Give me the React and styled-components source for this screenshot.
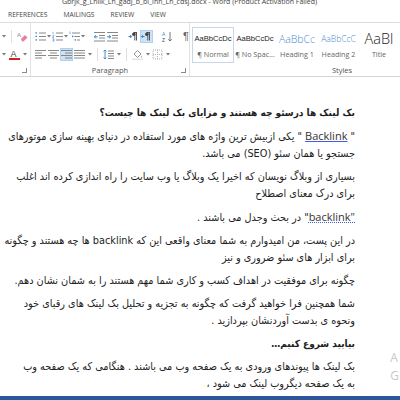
import styled, { createGlobalStyle } from "styled-components";

const Global = createGlobalStyle`
  html, body {
    margin: 0;
    padding: 0;
    width: 400px;
    height: 400px;
    overflow: hidden;
    background: #fff;
  }
`;

const Window = styled.div`
  width: 400px;
  height: 400px;
  display: flex;
  flex-direction: column;
  font-family: "Liberation Sans", "DejaVu Sans", sans-serif;
  overflow: hidden;
`;

const TitleBar = styled.div`
  height: 6px;
  overflow: hidden;
  display: flex;
  align-items: flex-end;
  padding-left: 62px;
  font-family: "Open Sans", "Liberation Sans", sans-serif;
  font-size: 7px;
  line-height: 8px;
  color: #444;
  white-space: nowrap;
`;

const Tabs = styled.div`
  height: 16px;
  display: flex;
  align-items: center;
  gap: 16px;
  padding-left: 8px;
  font-family: "Open Sans", "Liberation Sans", sans-serif;
  font-size: 6.7px;
  color: #444;
`;

const Ribbon = styled.div`
  height: 53px;
  display: flex;
  border-top: 1px solid #dcdcdc;
  border-bottom: 1px solid #d4d4d4;
  box-shadow: 0 1px 2px rgba(0, 0, 0, 0.06);
  background: #fff;
`;

const Group = styled.div`
  width: ${(p) => p.$w}px;
  flex-shrink: 0;
  display: flex;
  flex-direction: column;
  border-right: 1px solid #e2e2e2;
  position: relative;
`;

const Row = styled.div`
  height: 19px;
  display: flex;
  align-items: center;
  padding-left: ${(p) => p.$pad || 0}px;
  margin-top: ${(p) => p.$top || 0}px;
`;

const GroupLabel = styled.div`
  margin-top: auto;
  height: 13px;
  display: flex;
  align-items: center;
  justify-content: center;
  padding-left: ${(p) => p.$shift || 0}px;
  font-family: "Open Sans", "Liberation Sans", sans-serif;
  font-size: 7.5px;
  color: #555;
`;

const Launcher = styled.span`
  position: absolute;
  right: 3px;
  bottom: 3px;
  width: 4px;
  height: 4px;
  border-right: 1px solid #8a8a8a;
  border-bottom: 1px solid #8a8a8a;
`;

const Btn = styled.span`
  display: inline-flex;
  align-items: center;
  justify-content: center;
  width: ${(p) => p.$w || 13}px;
  height: 13px;
  box-sizing: border-box;
  background: ${(p) => (p.$active ? "#cde1f7" : "transparent")};
  border: 1px solid ${(p) => (p.$active ? "#b3cfee" : "transparent")};
`;

const CaretBox = styled.span`
  display: inline-flex;
  align-items: center;
  justify-content: center;
  width: 7px;
  height: 13px;
`;

const Sep = styled.span`
  width: 1px;
  height: 13px;
  background: #e0e0e0;
  margin: 0 4px;
`;

const Caret = () => (
  <CaretBox>
    <svg width="4" height="3" viewBox="0 0 4 3">
      <path d="M0 0h4L2 2.5z" fill="#777" />
    </svg>
  </CaretBox>
);

const G = "#7a7a7a";
const B = "#3a82cc";

const Icon = ({ children }) => (
  <svg width="11" height="11" viewBox="0 0 11 11">
    {children}
  </svg>
);

const Bullets = () => (
  <Icon>
    <rect x="0.5" y="1.2" width="1.4" height="1.4" fill={B} />
    <rect x="0.5" y="4.7" width="1.4" height="1.4" fill={B} />
    <rect x="0.5" y="8.2" width="1.4" height="1.4" fill={B} />
    <path d="M4 2h7M4 5.5h7M4 9h7" stroke={G} strokeWidth="0.9" />
  </Icon>
);

const Numbering = () => (
  <Icon>
    <path d="M1 0.8v2.4M0.5 4.6h1.4l-1.4 2h1.4M0.5 7.8h1.4v2.4H0.5M0.6 9h1.2" stroke={B} strokeWidth="0.6" fill="none" />
    <path d="M4 2h7M4 5.5h7M4 9h7" stroke={G} strokeWidth="0.9" />
  </Icon>
);

const Multilevel = () => (
  <Icon>
    <path d="M1 0.5v2.5" stroke={B} strokeWidth="0.6" />
    <rect x="3" y="4.7" width="1.4" height="1.4" fill={B} />
    <rect x="5.5" y="8.2" width="1.4" height="1.4" fill={B} />
    <path d="M3 2h8M5.5 5.5h5.5M8 9h3" stroke={G} strokeWidth="0.9" />
  </Icon>
);

const Indent = ({ dir }) => (
  <Icon>
    <path d="M0 1.5h11M5 4.5h6M5 7h6M0 10h11" stroke={G} strokeWidth="0.9" />
    {dir === "in" ? (
      <path d="M0 5.8h3.5M2 4.2l1.7 1.6L2 7.4" stroke={B} strokeWidth="1" fill="none" />
    ) : (
      <path d="M3.7 5.8H0.3M1.9 4.2L0.3 5.8l1.6 1.6" stroke={B} strokeWidth="1" fill="none" />
    )}
  </Icon>
);

const Direction = ({ rtl }) => (
  <Icon>
    <path d="M5.5 1.5h3.5M6.8 1.5v8M8.5 1.5v8" stroke="#444" strokeWidth="0.9" />
    <circle cx="5.8" cy="3.3" r="1.7" fill="#444" />
    {rtl ? (
      <path d="M3.5 5.5H0.5M1.8 4L0.4 5.5 1.8 7" stroke={B} strokeWidth="1" fill="none" />
    ) : (
      <path d="M0.5 5.5h3M2.2 4l1.4 1.5L2.2 7" stroke={B} strokeWidth="1" fill="none" />
    )}
  </Icon>
);

const Sort = () => (
  <Icon>
    <text x="0" y="4.6" fontSize="4.8" fill={B} fontFamily="Liberation Sans">A</text>
    <text x="0" y="10.6" fontSize="4.8" fill="#444" fontFamily="Liberation Sans">Z</text>
    <path d="M8 1v9M6.3 8.2L8 10l1.7-1.8" stroke="#666" strokeWidth="0.9" fill="none" />
  </Icon>
);

const Pilcrow = styled.span`
  font-family: "Liberation Sans", sans-serif;
  font-size: 11px;
  line-height: 11px;
  color: #666;
`;

const Align = ({ mode }) => {
  const rows = [1.5, 4, 6.5, 9];
  const widths = [11, 7, 11, 7];
  return (
    <Icon>
      {rows.map((y, i) => {
        const w = mode === "justify" ? 11 : widths[i];
        let x = 0;
        if (mode === "center") x = (11 - w) / 2;
        if (mode === "right") x = 11 - w;
        return <path key={i} d={`M${x} ${y}h${w}`} stroke={G} strokeWidth="0.9" />;
      })}
    </Icon>
  );
};

const LineSpacing = () => (
  <Icon>
    <path d="M2 1v9M0.5 2.5L2 1l1.5 1.5M0.5 8.5L2 10l1.5-1.5" stroke={B} strokeWidth="0.9" fill="none" />
    <path d="M5 2h6M5 4.5h6M5 7h6M5 9.5h6" stroke={G} strokeWidth="0.9" />
  </Icon>
);

const Shading = () => (
  <Icon>
    <path d="M2 5l3.5-3.5L9 5 5.5 8.5z" fill="#fff" stroke="#888" strokeWidth="0.9" />
    <path d="M9.3 6.5c0.6 1 0.8 1.6 0.2 2-0.6 0.3-1-0.6-0.2-2z" fill="#999" />
    <path d="M0 10.2h11" stroke="#e2e2e2" strokeWidth="1.4" />
  </Icon>
);

const Borders = () => (
  <Icon>
    <rect x="1" y="1" width="9" height="9" fill="none" stroke="#aaa" strokeWidth="0.9" strokeDasharray="1 1" />
    <path d="M5.5 1v9M1 5.5h9" stroke="#aaa" strokeWidth="0.9" strokeDasharray="1 1" />
  </Icon>
);

const Eraser = () => (
  <Icon>
    <text x="0" y="6" fontSize="6" fill="#888" fontFamily="Liberation Sans">A</text>
    <path d="M4 8l4-4 2.5 2.5-4 4H5z" fill="#e57fa8" />
  </Icon>
);

const FontColor = () => (
  <Icon>
    <text x="1.5" y="8" fontSize="9" fill="#444" fontFamily="Liberation Sans">A</text>
    <rect x="0" y="9" width="11" height="2" fill="#d01f24" />
  </Icon>
);

const Gallery = styled.div`
  display: flex;
  margin: 4px 0 0 2px;
  height: 36px;
`;

const StyleCard = styled.div`
  width: ${(p) => p.$w}px;
  flex-shrink: 0;
  box-sizing: border-box;
  display: flex;
  flex-direction: column;
  align-items: center;
  justify-content: space-between;
  padding: 2px 0 3px;
  border: 1px solid ${(p) => (p.$selected ? "#c7d6ea" : "transparent")};
  overflow: hidden;
  white-space: nowrap;
`;

const Preview = styled.div`
  height: 18px;
  display: flex;
  align-items: center;
  line-height: 1;
  font-family: ${(p) => (p.$light ? '"Open Sans", "Liberation Sans", sans-serif' : '"Liberation Sans", sans-serif')};
  font-size: ${(p) => p.$size}px;
  font-weight: ${(p) => (p.$light ? 300 : 400)};
  color: ${(p) => p.$color || "#222"};
`;

const StyleName = styled.div`
  font-family: "Open Sans", "Liberation Sans", sans-serif;
  font-size: 7.2px;
  line-height: 9px;
  color: #666;
`;

const DocArea = styled.div`
  flex: 1;
  position: relative;
  background: #fff;
  overflow: hidden;
  padding-top: 27px;
`;

const Page = styled.div`
  width: 355px;
  display: flex;
  flex-direction: column;
  align-items: flex-end;
`;

const Para = styled.div.attrs({ dir: "rtl" })`
  direction: rtl;
  display: flex;
  flex-direction: column;
  align-items: flex-start;
  margin-bottom: 6px;
  font-family: "DejaVu Sans Condensed", "DejaVu Sans", sans-serif;
  font-size: ${(p) => (p.$bold ? 10 : 10.8)}px;
  line-height: 17px;
  color: #1e1e1e;
  font-weight: ${(p) => (p.$bold ? 700 : 400)};
`;

const Line = styled.div`
  white-space: nowrap;
`;

const Latin = styled.span`
  font-family: "Open Sans", "Liberation Sans", sans-serif;
  font-size: 11px;
  color: #333;
  text-decoration: underline;
  text-decoration-style: ${(p) => (p.$dotted ? "dotted" : "solid")};
  text-decoration-color: #3c5ee8;
`;

const Watermark = styled.div`
  position: absolute;
  right: 1px;
  top: 272px;
  display: flex;
  flex-direction: column;
  font-family: "Open Sans", "Liberation Sans", sans-serif;
  font-size: 12px;
  line-height: 18px;
  color: #c8c8c8;
`;

const StatusBar = styled.div`
  height: 4px;
  background: #2b579a;
`;

export default function App() {
  return (
    <Window>
      <Global />
      <TitleBar>Gbrjk_g_Lhllk_Lh_gadj_b_bi_lhh_Lh_cdsj.docx - Word (Product Activation Failed)</TitleBar>
      <Tabs>
        <span>REFERENCES</span>
        <span>MAILINGS</span>
        <span>REVIEW</span>
        <span>VIEW</span>
      </Tabs>
      <Ribbon>
        <Group $w={30}>
          <Row $top={4}>
            <Caret />
            <Sep />
            <Btn><Eraser /></Btn>
          </Row>
          <Row>
            <Caret />
            <Btn $w={14}><FontColor /></Btn>
            <Caret />
          </Row>
          <GroupLabel />
          <Launcher />
        </Group>
        <Group $w={158}>
          <Row $top={4} $pad={3}>
            <Btn><Bullets /></Btn>
            <Caret />
            <Btn><Numbering /></Btn>
            <Caret />
            <Btn><Multilevel /></Btn>
            <Caret />
            <Sep />
            <Btn $w={14}><Indent dir="out" /></Btn>
            <Btn $w={14}><Indent dir="in" /></Btn>
            <Sep />
            <Btn><Direction /></Btn>
            <Btn $active><Direction rtl /></Btn>
            <Sep />
            <Btn $w={14}><Sort /></Btn>
            <Sep />
            <Btn><Pilcrow>¶</Pilcrow></Btn>
          </Row>
          <Row $pad={3}>
            <Btn><Align mode="left" /></Btn>
            <Btn><Align mode="center" /></Btn>
            <Btn $active><Align mode="right" /></Btn>
            <Btn><Align mode="justify" /></Btn>
            <Caret />
            <Sep />
            <Btn><LineSpacing /></Btn>
            <Caret />
            <Sep />
            <Btn><Shading /></Btn>
            <Caret />
            <Btn><Borders /></Btn>
            <Caret />
          </Row>
          <GroupLabel>Paragraph</GroupLabel>
          <Launcher />
        </Group>
        <Group $w={212}>
          <Gallery>
            <StyleCard $w={42} $selected>
              <Preview $size={7.6}>AaBbCcDc</Preview>
              <StyleName>¶ Normal</StyleName>
            </StyleCard>
            <StyleCard $w={42}>
              <Preview $size={7.6}>AaBbCcDc</Preview>
              <StyleName>¶ No Spac...</StyleName>
            </StyleCard>
            <StyleCard $w={42}>
              <Preview $size={10.5} $color="#4a8ad0" $light>AaBbCc</Preview>
              <StyleName>Heading 1</StyleName>
            </StyleCard>
            <StyleCard $w={41}>
              <Preview $size={8.5} $color="#4a8ad0" $light>AaBbCcC</Preview>
              <StyleName>Heading 2</StyleName>
            </StyleCard>
            <StyleCard $w={40}>
              <Preview $size={14.5} $light>AaBl</Preview>
              <StyleName>Title</StyleName>
            </StyleCard>
          </Gallery>
          <GroupLabel $shift={92}>Styles</GroupLabel>
        </Group>
      </Ribbon>
      <DocArea>
        <Page>
          <Para $bold>
            <Line>بک لینک ها درسئو چه هستند و مزایای بک لینک ها چیست؟</Line>
          </Para>
          <Para>
            <Line>" <Latin>Backlink</Latin> " یکی ازبیش ترین  واژه های مورد استفاده در دنیای  بهینه سازی موتورهای</Line>
            <Line>جستجو یا همان سئو (SEO) می باشد.</Line>
          </Para>
          <Para>
            <Line>بسیاری از وبلاگ نویسان که اخیرا یک وبلاگ یا وب سایت را راه اندازی کرده اند اغلب</Line>
            <Line>برای درک معنای اصطلاح</Line>
          </Para>
          <Para>
            <Line><Latin $dotted>"backlink</Latin>" در بحث وجدل می باشند .</Line>
          </Para>
          <Para>
            <Line>در این پست، من امیدوارم به شما معنای واقعی این که backlink ها  چه هستند و چگونه</Line>
            <Line>برای ابزار  های سئو ضروری و نیز</Line>
          </Para>
          <Para>
            <Line>چگونه برای موفقیت در اهداف کسب و کاری شما مهم هستند را به شمان نشان دهم.</Line>
          </Para>
          <Para>
            <Line> شما همچنین فرا خواهید گرفت که چگونه به تجزیه و تحلیل بک لینک های رقبای خود</Line>
            <Line>ونحوه ی بدست آوردنشان  بپردازید .</Line>
          </Para>
          <Para $bold>
            <Line>بیایید شروع کنیم…</Line>
          </Para>
          <Para>
            <Line>بک لینک ها پیوندهای ورودی به یک صفحه وب می باشند . هنگامی که یک صفحه وب</Line>
            <Line>به یک صفحه دیگروب لینک می شود ،</Line>
          </Para>
        </Page>
        <Watermark>
          <span>A</span>
          <span>G</span>
        </Watermark>
      </DocArea>
      <StatusBar />
    </Window>
  );
}
